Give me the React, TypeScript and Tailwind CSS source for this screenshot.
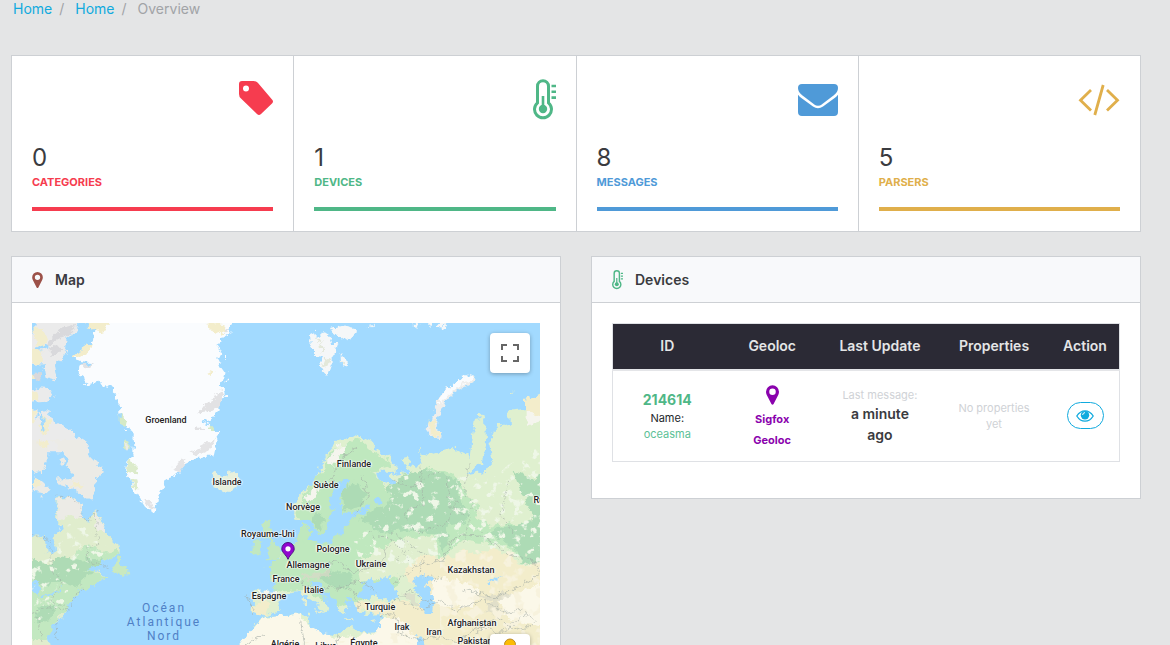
import type { ReactNode } from "react";

function TagIcon({ className }: { className: string }) {
  return (
    <svg viewBox="0 0 34 38" className={className} fill="currentColor" aria-hidden="true">
      <path
        fillRule="evenodd"
        d="M3 0h11.500q2.500 0 4.300 1.800L33 18.400q2 2 0 4L22 33q-2 2-4 0L2 17.600Q0 15.800 0 13V3Q0 0 3 0zM7 4.500a3 3 0 1 0 0 6 3 3 0 0 0 0-6z"
      />
    </svg>
  );
}

function ThermometerIcon({ className }: { className: string }) {
  return (
    <svg viewBox="0 0 23 42" className={className} fill="none" stroke="currentColor" aria-hidden="true">
      <path d="M4.500 7.200a5.500 5.500 0 0 1 11 0v16.600a8.500 8.500 0 1 1-11 0z" strokeWidth="3" />
      <path d="M10 17v13M18.500 7h4.500M18.500 12.800h4.500M18.500 18.600h4.500" strokeWidth="2.600" />
      <circle cx="10" cy="30" r="4.200" fill="currentColor" stroke="none" />
    </svg>
  );
}

function EnvelopeIcon({ className }: { className: string }) {
  return (
    <svg viewBox="0 0 40 32" className={className} fill="currentColor" aria-hidden="true">
      <path d="M4 0h32q4 0 4 4 0 4-4.500 7.500L24 20.300q-4 3-8 0L4.500 11.500Q0 8 0 4q0-4 4-4z" />
      <path d="M0 10.800q1.500 1.800 3 3L15 22.600q5 3.400 10 0l12-8.800q1.500-1.200 3-3V28q0 4-4 4H4q-4 0-4-4z" />
    </svg>
  );
}

function CodeIcon({ className }: { className: string }) {
  return (
    <svg viewBox="0 0 42 32" className={className} fill="none" stroke="currentColor" strokeWidth="2.800" aria-hidden="true">
      <path d="M13 6 2.500 16.200 13 26.500M29 6l10.500 10.200L29 26.500M25.200 1 16.800 31" />
    </svg>
  );
}

function PinIcon({ className }: { className: string }) {
  return (
    <svg viewBox="0 0 12 18" className={className} fill="currentColor" aria-hidden="true">
      <path
        fillRule="evenodd"
        d="M6 0a6 6 0 0 1 6 6q0 1.500-.6 2.700L7 17.300q-1 1.400-2 0L.6 8.700Q0 7.500 0 6a6 6 0 0 1 6-6zm0 3a3 3 0 1 0 0 6 3 3 0 0 0 0-6z"
      />
    </svg>
  );
}

function EyeIcon({ className }: { className: string }) {
  return (
    <svg viewBox="0 0 18 12" className={className} fill="none" stroke="currentColor" aria-hidden="true">
      <path d="M.8 6Q4 .8 9 .8T17.200 6Q14 11.200 9 11.200T.8 6z" strokeWidth="1.300" />
      <circle cx="9" cy="5.200" r="4.200" fill="currentColor" stroke="none" />
      <path d="M6.600 5A2.600 2.600 0 0 1 9 2.600" stroke="#fff" strokeWidth="1" />
    </svg>
  );
}

const stats = [
  { value: 0, label: "Categories", text: "text-[#f63c4f]", bar: "bg-[#f63c4f]", icon: <TagIcon className="h-[38px] w-[34px]" /> },
  { value: 1, label: "Devices", text: "text-[#4fb787]", bar: "bg-[#4fb787]", icon: <ThermometerIcon className="h-[42px] w-[23px]" /> },
  { value: 8, label: "Messages", text: "text-[#4f9ad8]", bar: "bg-[#4f9ad8]", icon: <EnvelopeIcon className="h-8 w-10" /> },
  { value: 5, label: "Parsers", text: "text-[#e0af4b]", bar: "bg-[#e0af4b]", icon: <CodeIcon className="h-8 w-[42px]" /> },
];

function Panel({ title, icon, children }: { title: string; icon: ReactNode; children: ReactNode }) {
  return (
    <section className="min-w-0 flex-1 border border-[#cdd0d4] bg-white">
      <header className="flex h-[46px] items-center gap-3 border-b border-[#cdd0d4] bg-[#f8f9fb] px-5">
        {icon}
        <h2 className="text-sm font-semibold">{title}</h2>
      </header>
      <div className="p-5">{children}</div>
    </section>
  );
}

const places = [
  { name: "Groenland", x: 134, y: 97 },
  { name: "Islande", x: 195, y: 159 },
  { name: "Finlande", x: 322, y: 141 },
  { name: "Suède", x: 294, y: 162 },
  { name: "Norvège", x: 271, y: 184 },
  { name: "Royaume-Uni", x: 236, y: 211 },
  { name: "Pologne", x: 301, y: 226 },
  { name: "Allemagne", x: 276, y: 242 },
  { name: "Ukraine", x: 339, y: 241 },
  { name: "France", x: 254, y: 256 },
  { name: "Italie", x: 282, y: 267 },
  { name: "Espagne", x: 237, y: 273 },
  { name: "Turquie", x: 348, y: 284 },
  { name: "Kazakhstan", x: 439, y: 247 },
  { name: "Irak", x: 370, y: 304 },
  { name: "Iran", x: 402, y: 309 },
  { name: "Afghanistan", x: 440, y: 300 },
  { name: "Pakistan", x: 443, y: 318 },
  { name: "Algérie", x: 253, y: 321 },
  { name: "Libye", x: 294, y: 323 },
  { name: "Égypte", x: 332, y: 320 },
  { name: "Russie", x: 515, y: 177 },
];

const water = "#a2daff";

function MapDrawing() {
  return (
    <svg viewBox="96 969 1524 1200" preserveAspectRatio="xMidYMin slice" className="h-full w-full" aria-hidden="true">
      <defs>
        <filter id="coast" x="-5%" y="-5%" width="110%" height="110%" colorInterpolationFilters="sRGB">
          <feTurbulence type="fractalNoise" baseFrequency="0.05" numOctaves="4" seed="7" />
          <feDisplacementMap in="SourceGraphic" scale="28" xChannelSelector="R" yChannelSelector="G" />
        </filter>
        <filter id="relief" x="0" y="0" width="100%" height="100%">
          <feTurbulence type="fractalNoise" baseFrequency="0.04" numOctaves="4" seed="3" />
          <feColorMatrix values="0 0 0 0 0.86  0 0 0 0 0.93  0 0 0 0 0.8  0 9 0 0 -5.3" />
          <feComposite in2="SourceAlpha" operator="in" />
        </filter>
        <filter id="rock" x="0" y="0" width="100%" height="100%">
          <feTurbulence type="fractalNoise" baseFrequency="0.03" numOctaves="3" seed="11" />
          <feColorMatrix values="0 0 0 0 0.93  0 0 0 0 0.89  0 0 0 0 0.72  0 9 0 0 -5" />
          <feComposite in2="SourceAlpha" operator="in" />
        </filter>
      </defs>
      <rect x="96" y="969" width="1524" height="1200" fill={water} />

      {/* Arctic Canada and northern Greenland */}
      <g transform="translate(0 750)" filter="url(#coast)">
        <path fill="#ebebeb" d="M115 200H245L225 245 200 262 198 300 185 330 165 345 172 385 155 395 138 390 133 360 110 352 96 345 80 330V265L96 255 108 225zM80 430 120 412 150 415 158 440 145 452 80 455zM80 480 110 478 108 510 122 485 145 480 152 508 185 525 210 540 240 565 265 580 268 610H80z" />
        <path fill="#f2edcd" d="M100 228l25 8 18 28-8 24-20 2-12-20zM80 295l30-4 18 15-8 40-25-8zM80 365l30 5-5 20H80zM80 428l28-2 5 22-33 6zM80 480h28l-5 40H80zM130 500l20 12 0 30-20 12-12-22z" />
        <path fill="#d9d9dc" d="M180 235l50-14-20 30-30 18-40 20 10-22zM150 290l42 5-20 20-25 2zM100 370l22-4 3 22-20 3z" />
        <path fill={water} d="M90 345l45-2 0 14H90zM150 292l-40 8-3-6 40-12zM128 475l5 60-8 2-4-60z" />
        <path fill="#fafcfe" d="M265 200 286 240 282 268 268 288 248 300 225 310 215 325 240 332 262 335 285 337 265 348 235 350 232 372 250 385 262 403 295 395 325 405 343 425 350 440 358 460 362 490 372 520 382 540 400 550 405 575 408 620H640L650 575 640 545 622 520 640 500 660 480 655 460 675 450 670 425 660 400 665 375 680 372 665 350 655 330 665 310 655 290 665 265 690 250 695 225 700 200z" />
        <path fill="#f3edcb" d="M262 200h65l-5 35-20 8-38-8zM272 282l-6 22-25 16-25 2 8-14 25-10 6-14zM618 215l60 4-5 25-25 12-18-22zM626 365l18 6-15 8z" />
        <path fill="#e2e2e4" d="M655 420l15 10-8 35-25 15-5-20zM625 455l30 12-20 18-40 6zM590 525l25 10-5 20-30-2zM600 560l40 5-10 25-30-5zM240 345l45-8-25 18zM672 235l18 4-18 10z" />
        <path fill="#d5eac6" d="M362 490l18 25-4 18-14-8zM628 520l20 25-5 25-20-20zM372 570l20 5 0 24h-20z" />
        <path fill={water} d="M606 505l34 18-4 5-34-16zM612 545l18 30-6 3-16-28z" />
        <path fill="#fafcfe" d="M672 318h6v8h-6zM676 432h8v10h-8zM674 385h5v10h-5z" />
      </g>

      {/* Svalbard and Novaya Zemlya */}
      <g transform="translate(840 750)" filter="url(#coast)">
        <path fill="#f5f7f8" d="M90 255 105 248 120 265 135 245 150 255 158 285 175 285 168 305 155 315 155 345 143 380 125 360 118 335 130 320 105 318 105 300 92 285zM150 235 185 225 228 235 215 270 195 275 180 265 160 250zM182 315l20 15 3 15-10 12-12-12zM262 228l18-4-6 8zM398 218l20 2-4 10zM470 232l12-14 20 4-12 14zM448 225h8v8h-8z" />
        <path fill="#e3e8da" d="M120 275l12 20-8 10zM135 325l18 4-8 22-22 4zM183 330l12 10-4 10zM104 255l14 18-6 10z" />
        <path fill="#eeeeec" d="M437 538 455 510 465 475 480 440 500 415 530 395 570 370 585 375 580 395 550 410 515 435 495 460 475 500 470 530 485 565 455 560z" />
        <path fill="#fafcfe" d="M480 445 500 415 530 395 570 370 585 375 570 392 535 410 505 435 480 465z" />
        <path fill="#f3edcb" d="M450 510l22-8-6 28 16 32-25-4-12-25z" />
        <path fill="#e0efd0" d="M596 492l12-4 3 10-14 2zM695 425h6v7h-6zM415 598h8v5h-8z" />
      </g>

      {/* North America, southern Greenland, Iceland */}
      <g transform="translate(60 1320)" filter="url(#coast)">
        <path fill="#ecebe6" d="M10 0H55L84 22 84 55 70 95 45 98 10 70zM90 0H195L210 50 248 90 245 110 225 118 228 150 218 182 190 170 150 140 112 132 115 118 150 118 160 100 140 80 150 50 115 30zM45 112 90 150 75 160 40 155zM62 165l10 2-4 12zM120 60l12-8 4 18-14 6zM312 8l18 6-10 18z" />
        <path fill="#f2edcd" d="M45 115l20 8-10 20-14-4zM160 120l28 18-8 10-20-8zM55 0l30 4-5 20-28-8z" />
        <path fill="#fafcfe" d="M345-30H600L583 5 560 40 530 55 490 75 480 100 440 115 430 140 415 170 410 195 400 218 375 200 355 170 335 140 330 110 318 95 322 65 340 40z" />
        <path fill="#dcebcb" d="M325 60l25 15-2 25-28-5zM332 115l18 4 2 26-14 0z" />
        <path fill="#e4e4e6" d="M585 0l-80 38 25 8 40-18zM490 50l-30 35 20 10 18-22zM365 175l20 4 22 32-20-6z" />
        <path fill="#e0edcd" d="M110 172 155 172 185 195 188 235 205 245 225 210 235 225 250 260 258 285 300 320 298 345 250 362 200 385 215 395 240 395 262 410 220 435 200 425 170 460 150 480 135 510 130 530 100 550 80 575 85 600 95 640H0V285L75 292 80 340 98 345 105 330 100 290 125 270 120 250 108 240z" />
        <path fill="#ecebe6" d="M112 174 155 172 185 195 188 232 150 225 112 245zM225 212l25 48 5 20-28-20z" />
        <path fill="#c2e8c0" d="M0 400 90 385 160 350 200 310 250 335 290 330 298 345 250 362 200 385 262 410 220 435 170 460 135 510 100 550 80 600H0z" />
        <path fill="#aedbb5" d="M0 350 80 370 130 350 180 362 210 355 250 362 195 392 225 395 190 415 170 440 110 425 70 440 0 395zM60 500l60-10-30 50-50 15z" />
        <path fill={water} d="M36 425l24 5-8 40-14-20zM60 470l40-12 22-16 6 3-28 20-36 12z" />
        <path fill="#c9e9c0" d="M275 395 290 355 300 350 300 370 322 380 325 400 300 402z" />
        <path fill="#e7f0dc" d="M575 100 590 95 600 110 625 100 645 95 663 125 650 140 615 155 580 140z" />
        <path fill="#c2e8c0" d="M725 260 735 240 752 245 745 262 755 285 760 310 775 320 790 340 780 355 735 362 750 340 738 325 752 318 745 295 728 285zM700 305 727 300 725 340 695 345z" />
      </g>

      {/* Europe, Asia and North Africa */}
      <g transform="translate(840 1320)" filter="url(#coast)">
        <path fill="#dff0cf" d="M45 235 40 190 70 150 100 130 120 90 145 35 175 0 230-15 275 5 290 30 330 55 350 80 345 95 285 95 305 130 335 140 340 125 330 105 385 100 370 55 390 50 385 75 410 80 430 55 420 40 450 45 500 30 515 20 570 50 575-10 585-60 615-65 618 0 605 70 560 105 620 95 640 55 628 0 640-20 650-40 690-50 685-85 735-90 735-120 820-150V900H-120V615L-90 600-80 560-50 528-82 518-80 455-15 455-10 410-40 383-20 370 0 345 20 330 45 310 60 300 65 260 80 250z" />
        <path fill="#bfe8be" d="M50 225 75 155 130 90 150 35 235-5 280 35 340 75 280 95 320 150 440 80 520 100 560 160 640 240 800 270V370L735 375 690 320 540 300 495 350 440 350 370 380 350 440 250 480 170 500 70 450-15 455-40 383 45 310 70 250z" />
        <path fill="#e0efcf" d="M230 370 290 330 380 290 460 290 480 350 400 370 350 415 240 425zM600 200 660 215 690 250 640 260 590 235zM-80 460H20L-10 500-50 528-80 518z" />
        <path fill="#addbb5" d="M320 140 370 105 430 85 500 105 545 130 535 170 575 230 540 250 500 258 510 290 485 338 470 285 380 270 300 280 235 235 290 205 330 190zM185 150 220 125 265 160 240 200 190 210zM95 235 110 210 135 240 115 275zM700 90 760 120 800 90V370L735 375 700 320 620 275 760 240zM120 400 210 395 220 430 180 450 120 420z" />
        <path fill="#f5f5ee" d="M75 170 125 130 140 90 110 170 80 190zM140 60 175 20 200 15 160 80zM-15 455H-60V465H0zM740-85l60-40v60l-60 20z" />
        <path fill="#f3edcb" d="M365 395 420 350 510 355 545 330 600 345 625 325 690 345 735 378 820 370V900H400L390 560 300 520 230 510 235 490 370 480 410 500 425 470 400 430zM-80 500-50 480-20 490-50 528-80 518zM735-90 735-120 820-150V-60z" />
        <path fill="#fbf8e9" d="M-55 535 60 520 90 560 165 590 290 580 305 530 370 540 420 610V900H-130V620zM460 415 530 420 600 450 580 500 480 500 455 470zM650 480 810 420V560L690 540z" />
        <path fill="#d9d8c8" opacity=".7" d="M60 405l80-10 15 12-90 14zM590 470l80-12 30 10-50 18 20 40-60-10 30-30zM360 455l40 10 30 50-40-30z" />
        <path fill={water} d="M55 250 95 235 105 275 125 285 140 270 150 225 160 215 145 180 155 160 175 130 200 110 218 115 205 132 185 155 180 190 190 215 215 220 260 203 265 215 230 225 210 240 195 265 180 285 150 300 110 310 85 300 95 280 85 260zM250 195l20-5 4 14-18 4zM283 180l15-12 8 14-15 14z" />
        <path fill="#bfe8be" d="M66 265l18-8 6 30-20 20z" />
        <path fill={water} d="M-55 530-10 515 0 485 30 457 60 452 80 470 110 490 130 515 145 505 138 480 108 452 92 427 110 425 135 452 165 475 175 500 190 520 205 495 200 470 225 490 235 515 260 522 302 520 300 560 290 577 245 580 215 560 165 585 130 580 90 560 85 525 60 520 20 525-20 530z" />
        <path fill="#e6efd0" d="M68 478h10v20H68zM70 455h8v14h-8zM102 508l25 2-5 12zM190 535h30v5h-30zM270 540l22-4-10 10z" />
        <path fill={water} d="M235 465 250 430 272 415 285 430 300 428 305 410 325 405 320 425 345 442 355 462 348 476 310 478 280 468 250 478zM400 420 425 405 460 412 460 425 438 432 445 455 462 470 455 522 435 525 418 500 425 470 405 445zM622 422 645 410 672 410 642 420 632 430zM405 590 430 598 450 640H420z" />
      </g>

      <g transform="translate(840 1320)" filter="url(#relief)">
        <path d="M320 120 450 90 540 110 640 110 780 0V370L540 300 480 350 350 400 250 400 220 300 290 240 330 190z" />
      </g>
      <g transform="translate(840 1320)" filter="url(#rock)">
        <path d="M480 330H780V700H480zM-30 610H400V580H320V600z" />
      </g>
      <g transform="translate(60 1320)" filter="url(#relief)">
        <path d="M120 250 180 250 280 330 180 380 130 490 60 540H36V370L110 350z" />
      </g>

      {/* Political borders */}
      <g fill="none" stroke="#9fa8a2" strokeWidth="2" opacity=".85" filter="url(#coast)">
        <g strokeDasharray="7 5">
          <path d="M170 1492l45 0 30 30 2 35 18 10 20-35 8 100-35 10 10 45 60 15M96 1605l42 8 18 50 2 60 30 20M190 1745l-40 60 60 15 40-70M96 1840l60-20 50 10M165 1860l10 60M110 1850l20 80" />
          <path d="M1180 1440l60 20 80-50M1260 1400l10 110-60 30 40 60 90-30 30-70M1340 1430l10 90 60 30-20 80M1100 1600l80 20 50 60M1180 1600l90 60-10 60 60 20M1410 1390l-20 80 40 70M1530 1440l-30 100 40 60M1190 1680l40-40 60 30" />
        </g>
        <path d="M990 1460l30-80 50-40M1090 1430l15 60-40 50M1185 1750l60-50 80-20 40-70 80-5 80 60 70 10 20 35 50-20M950 1710l60-30 50 40 80-30 30-60M900 1745l60 30 40-20 60 20 20 50M1010 1770l60-30 60 30M1130 1820l60-20 80 30 40-30 60 30 80-30 70 40 50-10M1140 1850l40-10 20 60 60 20 60-10 50 20 60-50 70 20 80-60 30 20M1390 1770l90 20 80-30 60-40M1430 1900l60-50 60 40 60-20M900 1850l20 130M1010 1900l20 80M725 1940l70-40M740 1785l20 60M1200 1790l30-20 60 40" />
      </g>
    </svg>
  );
}

function WorldMap() {
  return (
    <div className="relative h-[400px] overflow-hidden">
      <MapDrawing />
      {places.map((p) => (
        <span
          key={p.name}
          className="absolute -translate-x-1/2 -translate-y-1/2 font-[Roboto,sans-serif] text-[9px] leading-3 font-medium whitespace-nowrap text-[#222] [text-shadow:0_0_2px_#fff,0_0_2px_#fff,1px_0_1px_#fff,-1px_0_1px_#fff]"
          style={{ left: p.x, top: p.y }}
        >
          {p.name}
        </span>
      ))}
      <p className="absolute top-[278px] left-[132px] -translate-x-1/2 text-center font-[Roboto,sans-serif] text-xs leading-[14px] tracking-[2px] text-[#4f80c6]">
        Océan
        <br />
        Atlantique
        <br />
        Nord
      </p>
      <svg viewBox="0 0 14 18" className="absolute top-[219px] left-[249px] h-[18px] w-[14px]" aria-label="Device position">
        <path d="M7 .5a6.200 6.200 0 0 1 6.200 6.300C13.200 10.500 9 12.500 7 17.300 5 12.500.8 10.500.8 6.800A6.200 6.200 0 0 1 7 .5z" fill="#9106cf" stroke="#4b1180" />
        <circle cx="7" cy="6.800" r="2.600" fill="#fff" />
      </svg>
      <button
        type="button"
        aria-label="Toggle fullscreen"
        className="absolute top-[10px] right-[10px] flex size-10 items-center justify-center rounded-sm bg-white shadow-[0_1px_4px_rgba(0,0,0,0.3)]"
      >
        <svg viewBox="0 0 18 18" className="size-[18px]" fill="none" stroke="#666" strokeWidth="2">
          <path d="M1 6V1h5M12 1h5v5M17 12v5h-5M6 17H1v-5" />
        </svg>
      </button>
      <button
        type="button"
        aria-label="Street view"
        className="absolute top-[311px] right-[10px] flex size-10 justify-center rounded-sm bg-white pt-1 shadow-[0_1px_4px_rgba(0,0,0,0.3)]"
      >
        <svg viewBox="0 0 24 32" className="h-8 w-6">
          <path d="M6 13h12l-2 10h-2v8h-4v-8H8z" fill="#fbbc04" />
          <circle cx="12" cy="6.500" r="5.500" fill="#fbbc04" stroke="#b98a2a" />
        </svg>
      </button>
    </div>
  );
}

function DevicesTable() {
  return (
    <table className="mb-4 w-full table-fixed border-collapse border border-[#dfe1e5] text-center">
      <colgroup>
        <col className="w-[21.500%]" />
        <col className="w-[20%]" />
        <col className="w-[22.500%]" />
        <col className="w-[22.500%]" />
        <col className="w-[13.500%]" />
      </colgroup>
      <thead className="border-b-2 border-[#e4e5e8] bg-[#2b2a35] text-sm text-[#e4e5e6]">
        <tr className="h-[46px]">
          <th className="font-semibold">ID</th>
          <th className="font-semibold">Geoloc</th>
          <th className="font-semibold">Last Update</th>
          <th className="font-semibold">Properties</th>
          <th className="font-semibold">Action</th>
        </tr>
      </thead>
      <tbody>
        <tr className="h-[92px] text-[11px] leading-4">
          <td>
            <a href="#device" className="text-sm leading-5 font-bold text-[#4fb787]">214614</a>
            <div className="text-[#23282c]">Name:</div>
            <div className="text-[#5cc196]">oceasma</div>
          </td>
          <td>
            <a href="#geoloc" className="flex flex-col items-center pt-1 leading-[21px] font-bold text-[#8a02ad]">
              <PinIcon className="mb-1 h-5 w-[13px]" />
              <span>Sigfox</span>
              <span>Geoloc</span>
            </a>
          </td>
          <td className="px-3">
            <div className="text-[#cfd2d6]">Last message:</div>
            <div className="px-1 text-sm leading-[21px] font-semibold">a minute ago</div>
          </td>
          <td className="px-4 text-[#cfd2d6]">No properties yet</td>
          <td>
            <button
              type="button"
              aria-label="View device"
              className="inline-flex h-[27px] w-[37px] items-center justify-center rounded-full border border-[#10aade] text-[#10aade]"
            >
              <EyeIcon className="h-3 w-[18px]" />
            </button>
          </td>
        </tr>
      </tbody>
    </table>
  );
}

export default function App() {
  return (
    <div className="h-screen overflow-hidden bg-[#e4e5e6] pr-[29px] pl-[11px] font-[Inter,'Liberation_Sans',sans-serif] text-sm text-[#3a3b40]">
      <nav aria-label="Breadcrumb" className="flex gap-[7px] px-0.5 leading-[18px] text-[#a1a3a6]">
        <a href="#home" className="text-[#10aade]">Home</a>
        <span className="pr-1">/</span>
        <a href="#home" className="text-[#10aade]">Home</a>
        <span className="pr-1">/</span>
        <span>Overview</span>
      </nav>

      <main>
        <section className="mt-[37px] grid grid-cols-4 border-y border-r border-[#cdd0d4] bg-white">
          {stats.map((s) => (
            <div key={s.label} className="border-l border-[#cdd0d4] p-5">
              <div className={`flex h-12 items-center justify-end ${s.text}`}>{s.icon}</div>
              <div className="mt-[18px] text-2xl leading-8">{s.value}</div>
              <div className={`text-[11px] leading-4 font-bold uppercase ${s.text}`}>{s.label}</div>
              <div className={`mt-[17px] h-1 ${s.bar}`} />
            </div>
          ))}
        </section>

        <div className="mt-6 flex items-start gap-[30px]">
          <Panel title="Map" icon={<PinIcon className="h-4 w-[11px] text-[#9c5148]" />}>
            <WorldMap />
          </Panel>
          <Panel title="Devices" icon={<ThermometerIcon className="h-5 w-[11px] text-[#4fb787]" />}>
            <DevicesTable />
          </Panel>
        </div>
      </main>
    </div>
  );
}
